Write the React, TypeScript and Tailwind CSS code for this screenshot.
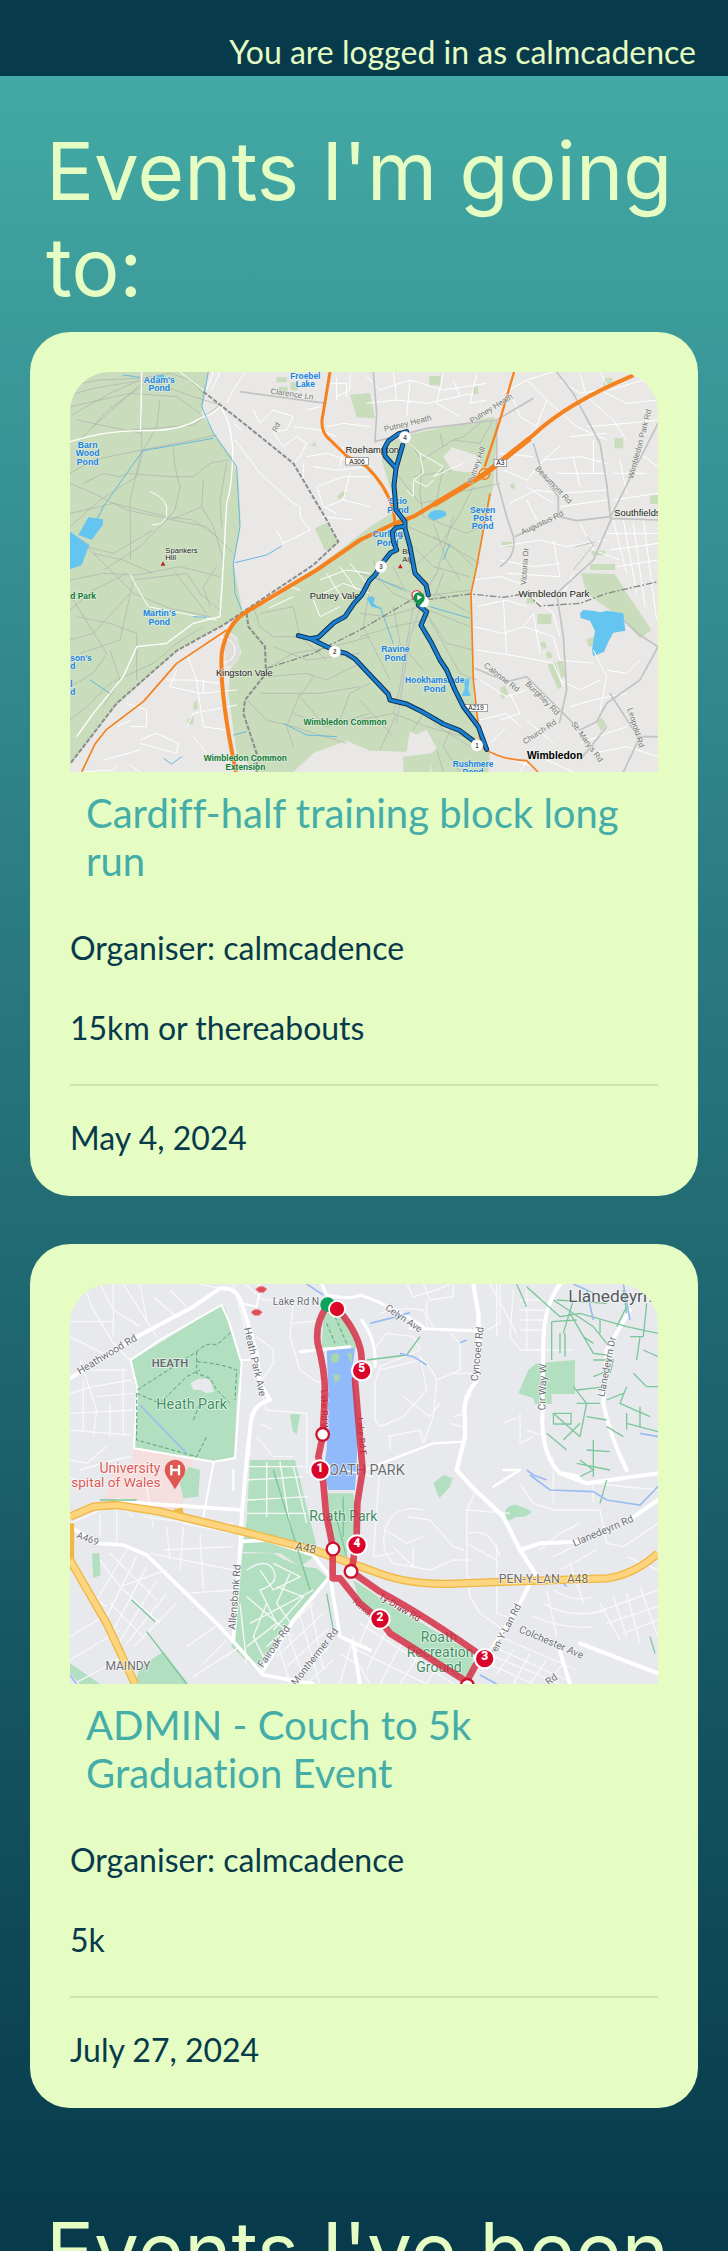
import type { ReactNode } from "react";

type Label = {
  x: number;
  y: number;
  text: string;
  fill: string;
  size?: number;
  rotate?: number;
  bold?: boolean;
  anchor?: "start" | "middle" | "end";
};

function MapLabels({ labels, halo }: { labels: Label[]; halo: string }) {
  return (
    <g>
      {labels.map((l, i) => (
        <text
          key={i}
          x={l.x}
          y={l.y}
          fill={l.fill}
          fontSize={l.size ?? 27}
          fontWeight={l.bold ? 700 : 400}
          textAnchor={l.anchor ?? "middle"}
          stroke={halo}
          strokeWidth={5}
          strokeLinejoin="round"
          paintOrder="stroke"
          transform={l.rotate ? `rotate(${l.rotate} ${l.x} ${l.y})` : undefined}
        >
          {l.text}
        </text>
      ))}
    </g>
  );
}

const water = "#1583e0";
const wood = "#0b7a35";
const road = "#777777";
const ink = "#222222";

const wimbledonLabels: Label[] = [
  { x: 298, y: 68, text: "Adam's", fill: water, bold: true, size: 26 },
  { x: 298, y: 94, text: "Pond", fill: water, bold: true, size: 26 },
  { x: 736, y: 58, text: "Froebel", fill: water, bold: true, size: 25 },
  { x: 736, y: 82, text: "Lake", fill: water, bold: true, size: 25 },
  { x: 83, y: 263, text: "Barn", fill: water, bold: true, size: 26 },
  { x: 83, y: 289, text: "Wood", fill: water, bold: true, size: 26 },
  { x: 83, y: 315, text: "Pond", fill: water, bold: true, size: 26 },
  { x: 316, y: 578, text: "Spankers", fill: ink, size: 23, anchor: "start" },
  { x: 316, y: 600, text: "Hill", fill: ink, size: 23, anchor: "start" },
  { x: 695, y: 110, text: "Clarence Ln", fill: road, size: 24, rotate: 8 },
  { x: 937, y: 278, text: "Roehampton", fill: ink, size: 28 },
  { x: 655, y: 205, text: "Rd", fill: road, size: 22, rotate: -62 },
  { x: 1045, y: 198, text: "Putney Heath", fill: road, size: 24, rotate: -14 },
  { x: 1298, y: 152, text: "Putney Heath", fill: road, size: 24, rotate: -32 },
  { x: 1257, y: 318, text: "Putney Hill", fill: road, size: 24, rotate: -70 },
  { x: 1475, y: 380, text: "Beaumont Rd", fill: road, size: 24, rotate: 46 },
  { x: 1450, y: 495, text: "Augustus Rd", fill: road, size: 24, rotate: -25 },
  { x: 1747, y: 254, text: "Wimbledon Park Rd", fill: road, size: 24, rotate: -75 },
  { x: 1663, y: 467, text: "Southfields", fill: ink, size: 28, anchor: "start" },
  { x: 1014, y: 432, text: "Scio", fill: water, bold: true, size: 26 },
  { x: 1014, y: 458, text: "Pond", fill: water, bold: true, size: 26 },
  { x: 1268, y: 458, text: "Seven", fill: water, bold: true, size: 26 },
  { x: 1268, y: 483, text: "Post", fill: water, bold: true, size: 26 },
  { x: 1268, y: 508, text: "Pond", fill: water, bold: true, size: 26 },
  { x: 983, y: 531, text: "Curling", fill: water, bold: true, size: 26 },
  { x: 983, y: 557, text: "Pond", fill: water, bold: true, size: 26 },
  { x: 1043, y: 583, text: "Big", fill: ink, size: 23 },
  { x: 1043, y: 605, text: "Alp", fill: ink, size: 23 },
  { x: 31, y: 717, text: "d Park", fill: wood, bold: true, size: 25, anchor: "start" },
  { x: 298, y: 769, text: "Martin's", fill: water, bold: true, size: 26 },
  { x: 298, y: 795, text: "Pond", fill: water, bold: true, size: 26 },
  { x: 31, y: 902, text: "son's", fill: water, bold: true, size: 25, anchor: "start" },
  { x: 31, y: 928, text: "d", fill: water, bold: true, size: 25, anchor: "start" },
  { x: 31, y: 980, text: "l", fill: water, bold: true, size: 25, anchor: "start" },
  { x: 31, y: 1006, text: "d", fill: water, bold: true, size: 25, anchor: "start" },
  { x: 824, y: 718, text: "Putney Vale", fill: ink, size: 28 },
  { x: 553, y: 949, text: "Kingston Vale", fill: ink, size: 28 },
  { x: 855, y: 1094, text: "Wimbledon Common", fill: wood, bold: true, size: 25 },
  { x: 556, y: 1204, text: "Wimbledon Common", fill: wood, bold: true, size: 25 },
  { x: 556, y: 1229, text: "Extension", fill: wood, bold: true, size: 25 },
  { x: 1482, y: 712, text: "Wimbledon Park", fill: ink, size: 29 },
  { x: 1402, y: 620, text: "Victoria Dr", fill: road, size: 24, rotate: -86 },
  { x: 1006, y: 876, text: "Ravine", fill: water, bold: true, size: 26 },
  { x: 1006, y: 902, text: "Pond", fill: water, bold: true, size: 26 },
  { x: 1124, y: 969, text: "Hookhamslade", fill: water, bold: true, size: 25 },
  { x: 1124, y: 995, text: "Pond", fill: water, bold: true, size: 26 },
  { x: 1320, y: 958, text: "Calonne Rd", fill: road, size: 24, rotate: 38 },
  { x: 1442, y: 1020, text: "Burghley Rd", fill: road, size: 24, rotate: 45 },
  { x: 1443, y: 1122, text: "Church Rd", fill: road, size: 24, rotate: -33 },
  { x: 1575, y: 1150, text: "St. Mary's Rd", fill: road, size: 24, rotate: 54 },
  { x: 1720, y: 1105, text: "Leopold Rd", fill: road, size: 24, rotate: 73 },
  { x: 1484, y: 1197, text: "Wimbledon", fill: "#000000", bold: true, size: 31 },
  { x: 1239, y: 1222, text: "Rushmere", fill: water, bold: true, size: 25 },
  { x: 1239, y: 1246, text: "Pond", fill: water, bold: true, size: 25 },
];

function Shield({ x, y, text }: { x: number; y: number; text: string }) {
  const w = text.length * 15 + 8;
  return (
    <g>
      <rect x={x - w / 2} y={y - 11} width={w} height={22} fill="#fff" stroke="#777" strokeWidth={2} />
      <text x={x} y={y + 7} fontSize={20} textAnchor="middle" fill="#111">
        {text}
      </text>
    </g>
  );
}

function WimbledonMap() {
  return (
    <svg
      viewBox="30 36 1764 1200"
      preserveAspectRatio="xMidYMid slice"
      role="img"
      aria-label="Route map of Wimbledon Common"
      className="block h-[400px] w-full rounded-t-[40px] font-['Liberation_Sans',sans-serif]"
    >
      <rect x="30" y="36" width="1764" height="1200" fill="#e9e8e6" />
      <g fill="#c9dcbc">
        <path d="M30 36H445L425 160L470 230L515 290L535 350L542 490L520 610L550 765L490 795L350 872L170 1035L30 1215Z" />
        <path d="M640 720L840 570L930 500L1010 450L965 300L985 250L1040 225L1300 170L1312 190L1300 380L1250 620L1232 700L1240 1000L1258 1120L1290 1175L1285 1236H1115L1110 1180L1090 1130L1050 1115L1040 1175L930 1172L860 1142L760 1180L700 1236H590L530 1180L505 1000L510 930L545 880L530 830L500 810L550 760Z" />
        <path d="M870 105L930 98L945 175L890 172Z" />
        <path d="M650 52h30v15h-30zM655 80h28v13h-28zM692 67h22v24h-22zM1108 48h34v28h-34zM1238 80h16v22h-16zM1632 54h26v26h-26zM1664 235h26v30h-26zM1770 406l28 0v26h-28z" />
        <path d="M765 505L800 488L838 550L795 572ZM830 410L850 393L860 402L838 418ZM752 255L766 245L770 260ZM1350 372L1362 370L1366 384L1354 388ZM1325 545h30v16h-30zM1595 572h40v14h-40zM1590 612h75v18h-75z" />
        <path d="M1563 640L1665 642L1700 700L1775 810L1740 835L1690 780L1580 700Z" />
        <path d="M1432 762h42v30h-42zM1400 715h25v15h-25zM1578 840L1605 828L1610 850L1588 862ZM1440 850l14-6 8 18-14 6zM1456 880l14-6 8 18-14 6zM1462 915l24-10 20 75-12 8zM1490 905l18-6 10 50-14 6z" />
        <path d="M1608 1082L1625 1073L1640 1095L1622 1112ZM1030 1190L1115 1180L1110 1236H1030ZM1320 985L1335 975L1345 1000L1325 1018Z" />
        <path d="M400 1030l10-10 5 25-14 6zM380 1080l20-14 0 28-20-4z" />
      </g>
      <path d="M1150 290L1175 262L1258 288L1265 340L1176 332Z" fill="#e9e8e6" />
      <path d="M490 820Q545 830 540 880Q535 920 500 918" fill="#e0dedb" />
      <path d="M1040 1136L1100 1110L1130 1165L1115 1180L1095 1176Z" fill="#e9e8e6" />

      <g fill="#63c5f0">
        <path d="M85 472L130 478L128 495L95 540L55 525Z" />
        <path d="M30 515L88 555L65 615L30 628Z" />
        <path d="M1103 468Q1110 448 1140 450Q1165 455 1158 468Q1135 478 1120 482Z" />
        <path d="M1560 760L1570 750L1605 753Q1620 760 1640 752L1690 760L1696 812L1660 818L1645 845L1632 875L1600 888L1596 870L1605 812L1590 782L1562 774Z" />
        <path d="M920 715L935 708L945 715L940 730L965 748L935 740Z" />
        <path d="M1210 958L1228 955L1225 990L1232 1008L1205 1008L1215 985Z" />
        <path d="M290 44h22v10h-22z" />
      </g>

      <g fill="none" stroke="#afb0ac" strokeWidth="2">
        <path d="M30 75L120 60L240 55L330 40M35 165L150 100L240 60M60 240L150 145L250 75M30 105L100 85L190 70L260 60L400 110L480 135M100 200L245 70M30 140L210 100L350 110L420 160M330 40L390 60L430 100" />
        <path d="M30 340L100 300L245 270L400 240L470 225M245 160L245 270L210 420L212 600M250 270L230 350L120 420L30 500M50 180L245 220M210 210L400 195L480 135M70 370L130 340L180 350L205 340L330 350L400 350L450 310L505 300M300 120L290 200L250 270" />
        <path d="M30 370L100 400L200 450L340 480L440 500L520 580M30 460L160 430L320 470L400 480L470 530M340 260L345 320L360 380L345 450L320 480L240 560L130 630M430 360L425 440L380 460L330 480M425 440L460 500L490 600M500 310L480 420L485 500M60 540L140 620L220 700L330 745L450 770M80 560L160 580L280 510M100 580L190 600L280 640" />
        <path d="M30 660L130 640L230 645L360 620L480 650M30 750L100 690L200 640M40 720L90 800L140 880L100 940L30 980M50 770L150 790L230 820L230 960M150 870L180 960L130 1040M60 880L180 840L220 660L380 640L420 700L490 760M30 840L100 820L210 700M340 630L440 760M470 620L430 680L450 740M30 1080L80 1040L150 970L280 910L350 850L430 800" />
        <path d="M1000 330L1080 430L1130 420L1180 400L1320 370M1040 230L1085 300L1180 240L1260 250L1300 180M1085 300L1080 400L1090 470M1140 220L1150 260M1180 240L1210 230L1260 190M1060 350L1180 330M1130 420L1150 320M1000 480L1090 520L1180 560L1240 620M1120 490L1160 600L1200 660M1180 470L1130 640L1090 700M1090 470L1220 520L1260 500M1060 560L1120 620L1230 650M1120 530L1260 610M1040 640L1150 540L1200 460L1240 380" />
        <path d="M900 640L1020 680L1080 710L1230 690M940 600L960 660L1000 700L1090 740M1000 620L1040 700M900 760L980 770L1080 740L1230 800M900 830L1000 800L1100 780M1060 740L1040 850L1020 980L1000 1060M1100 760L1160 850L1240 870M1110 780L1200 940L1250 960M930 680L910 800L960 900L990 960M1000 740L1020 850L1090 930M1130 700L1230 760M1150 640L1120 720" />
        <path d="M630 920L700 880L820 860L930 830M620 950L740 940L800 960L900 910M600 1000L780 1000L900 980M700 1060L800 1100L930 1060M720 1000L680 1100L700 1160M840 1080L870 1000L930 970M560 1020L620 1080L700 1100L860 1150M900 1080L1000 1060L1100 1100L1250 1140M960 1170L1010 1060M760 950L720 1010L780 1080M900 1020L1000 1130M1090 1060L1060 1110M1120 1090L1230 1160M1170 1110L1150 1160L1200 1236M1130 1170L1150 1236" />
        <path d="M580 740L600 800L640 830L720 830M600 760L700 740L720 830L800 900M640 860L740 900L900 880" />
      </g>

      <g fill="none" stroke="#ffffff" strokeWidth="4" strokeLinejoin="round">
        <path d="M30 245Q140 210 250 212T420 175Q470 160 482 135M245 36L242 215M482 140Q520 200 518 290T500 430L490 615L480 770L400 790L320 850L230 860L190 950L100 1060L50 1130" />
        <path d="M270 395Q310 410 320 440V470L305 490L275 495M210 640L230 680L265 740L470 780M360 36L430 90" strokeWidth="3" />
        <path d="M460 36L440 90M555 36L520 90L500 130M480 36L455 90M525 240L600 340L700 430L720 440V470L750 510M650 510L670 550L750 510" strokeWidth="3" />
        <path d="M520 190L545 210M580 150L600 190L640 150L700 170L680 210L640 215L670 260L710 230L740 250L720 290L700 310M740 150L780 140M810 70H860V110M830 50V120M870 40V90L830 110M800 200L850 190L930 200M700 200L780 210L830 230M740 290L800 280L860 300M760 320L830 330L930 320M850 260L840 320M770 380L850 350L930 350M770 380L790 440L830 460M800 440L850 420L930 440M870 340L850 420M730 310V360M790 470L880 480" strokeWidth="3" />
        <path d="M1040 240L1080 280L1150 320M1080 280L1090 340L1060 360L1100 380L1120 360M1040 390L1060 410L1060 365M1150 320L1120 350L1210 310" strokeWidth="3" />
        <path d="M920 50L960 90L1050 60L1150 90L1280 70M1000 36L1010 120L1100 130L1240 100M1050 60L1040 170M1150 40L1130 130L1200 170M1250 40L1230 130L1280 120M1180 60L1200 110M920 130L1010 120M1330 100L1400 60L1460 120L1430 200L1380 170L1360 120M1400 60L1480 36M1460 120L1550 200L1640 240M1500 60L1560 100L1620 90L1700 130L1794 120M1560 40L1580 110L1660 180L1700 240M1620 36L1650 90L1750 60M1580 200L1700 190L1794 180M1530 230L1640 220" strokeWidth="3" />
        <path d="M1330 330L1400 360L1450 300L1500 260M1350 430L1430 390L1500 400M1320 280L1420 290M1450 300L1560 290L1640 310M1490 340L1640 340M1540 290L1560 380M1500 400L1640 390M1600 240V340M1400 420L1430 480M1660 340H1760M1680 300L1700 400M1740 280L1794 320M1500 440L1640 420M1400 380L1480 430M1660 420L1794 400" strokeWidth="3" />
        <path d="M1320 560L1440 540L1520 560L1640 540M1320 600L1420 620L1500 610M1340 640L1500 650L1480 540M1560 490L1600 570L1680 600M1660 480L1700 640M1690 480L1730 700M1720 490L1755 740M1750 480L1790 780M1640 520H1794M1650 570L1794 550M1670 620L1794 600M1540 640L1510 700" strokeWidth="3" />
        <path d="M1240 660L1320 650L1380 670M1250 740L1340 720L1400 740M1240 800L1330 820L1390 800L1420 760M1330 720L1340 880M1250 870L1380 890L1480 910M1420 760L1440 880M1390 800L1480 830L1500 900L1600 910M1400 700L1480 760L1500 830M1480 910L1510 980" strokeWidth="3" />
        <path d="M1260 960L1340 1010L1400 990M1350 1000L1380 1060L1320 1080M1260 1080L1340 1060L1380 1100M1290 1150L1340 1100M1500 960L1560 990L1620 960M1600 870L1640 950L1620 1050M1530 1040L1600 1020L1700 1000M1400 1080L1480 1150M1560 1150L1640 1120L1700 1100M1600 1180L1700 1160L1794 1190M1460 1200L1540 1236M1330 1190L1420 1220M1640 930L1700 940L1740 900M1380 1236L1400 1205" strokeWidth="3" />
        <path d="M780 660L860 630L930 640M790 700L850 670L930 700M760 720L780 770L840 740M800 640L850 720M840 620L890 690M870 610L920 670M625 745L700 710M690 680L720 690M480 830Q525 840 525 870T490 910" strokeWidth="3" />
        <path d="M320 960L400 960L480 970M350 930L330 980L420 1000L530 990M380 880L410 960L430 1100L500 1110M430 960V1000M380 1100L400 1060L530 1035M200 1030L260 1050L260 1100L210 1100M240 1140L290 1120L355 1150L350 1180L240 1150M400 1130L440 1180M170 1100L215 1080M130 1200L240 1170M60 1236L160 1230L170 1215M240 1236L210 1215" strokeWidth="3" />
      </g>

      <g fill="none" stroke="#c2c2c2" strokeWidth="5">
        <path d="M940 36L950 160L945 245L1100 205L1310 180L1420 115M1310 180V360L1340 470L1360 530Q1370 590 1320 620M1490 36L1540 100L1620 250L1640 370L1652 480L1600 600L1490 700L1510 830L1520 990L1498 1090M1420 250L1450 350L1495 410V465L1365 530M1495 470L1550 482L1652 470L1794 190M1652 475L1794 480M1245 925L1340 965L1400 950L1560 1110L1610 1085L1640 1030L1740 960L1794 860M1794 860L1740 825L1690 780M1650 1000L1740 1140M1794 1130L1740 1130L1690 1236M1560 1200L1640 1100M540 95L800 130" />
        <path d="M1130 640L1090 700L1075 760L1050 830L1010 1090" strokeWidth="4" />
        <path d="M1540 630L1560 605L1600 555L1580 530M1545 560L1610 545" strokeWidth="3" />
      </g>
      <g fill="none" stroke="#68b8dc" strokeWidth="3">
        <path d="M445 36L425 140L460 220L530 320L540 500L520 610L525 700L545 750M250 270L200 340L130 440L110 480M250 272L460 235M525 608L620 585L665 558M190 45L240 52M400 770L440 772M90 960L150 1000M310 1195L335 1212L365 1190M520 1125L560 1115M670 1090L740 1125L830 1130M940 650L1030 690M960 740L1000 850M1150 600L1170 550M1110 740L1230 775" />
      </g>

      <path
        d="M430 95L545 185L700 310L800 480L835 545L760 615L490 795L350 872L170 1030L30 1212M560 760L565 800L615 860L618 940L555 1020L550 1060L590 1180V1236"
        fill="none"
        stroke="#8c8c8c"
        strokeWidth="6"
        strokeDasharray="14 5"
      />
      <path
        d="M620 925L760 880L900 810L1070 710L1110 718L1230 702L1330 712L1400 700L1440 738L1560 730L1640 700L1794 665"
        fill="none"
        stroke="#888"
        strokeWidth="4"
        strokeDasharray="20 6 6 6"
      />

      <g fill="none" stroke="#f5811f" strokeLinejoin="round">
        <path d="M810 36L786 180Q784 210 800 230L860 288L920 320Q1000 400 1005 490" strokeWidth="9" />
        <path d="M1362 36L1320 180L1274 320" strokeWidth="7" />
        <path d="M1290 400L1250 620L1233 700L1240 960L1252 1070L1262 1160Q1320 1200 1400 1202L1434 1236" strokeWidth="5" />
        <circle cx="1273" cy="342" r="16" strokeWidth="5" />
        <path d="M500 810L350 910L250 1025L140 1108L105 1152L65 1236" strokeWidth="5" />
        <path d="M1720 46Q1520 130 1420 225L1300 325L1060 470L1000 492L900 540L770 630L560 755Q500 790 485 880Q478 1000 528 1236" strokeWidth="12" />
        <path d="M1410 235L1270 345L1120 435" strokeWidth="16" />
      </g>

      <path d="M309 604l7 13h-14zM1023 518l7 13h-14zM1021 612l7 13h-14z" fill="#c3192d" />
      <Shield x={891} y={304} text="A306" />
      <Shield x={1321} y={309} text="A3" />
      <Shield x={1248} y={1044} text="A219" />
      <MapLabels labels={wimbledonLabels} halo="#eef3ec99" />

      {[
        { color: "#10324e", width: 15 },
        { color: "#197fd3", width: 9 },
      ].map(({ color, width }) => (
        <path
          key={color}
          d="M1040 215L1015 222L985 243L973 265L975 288L1008 325L1028 255M1008 325L1002 375L1008 450L1035 485V505L1050 560L1065 640L1098 675L1105 705M1035 498L1008 503L997 515L1000 545L1010 570L992 578L965 612L945 645L928 662L905 705L882 730L855 770L822 788L775 832L750 836L715 827M755 838L825 872L858 880L885 897L930 945L985 1003L990 1020L1040 1032L1090 1057L1150 1092L1200 1112L1250 1150M1075 735L1100 756L1083 796L1115 850L1140 900L1160 930L1185 990L1210 1040L1255 1100L1280 1168"
          fill="none"
          stroke={color}
          strokeWidth={width}
          strokeLinejoin="round"
          strokeLinecap="round"
        />
      ))}
      {[
        { x: 1035, y: 232, n: "4" },
        { x: 963, y: 620, n: "3" },
        { x: 824, y: 875, n: "2" },
        { x: 1251, y: 1156, n: "1" },
      ].map(({ x, y, n }) => (
        <g key={n}>
          <circle cx={x} cy={y} r="18" fill="#fff" stroke="#ccc" strokeWidth="1" />
          <text x={x} y={y + 7} fontSize="19" fontWeight="700" textAnchor="middle" fill="#555">
            {n}
          </text>
        </g>
      ))}
      <circle cx="1090" cy="725" r="17" fill="#fff" />
      <circle cx="1070" cy="706" r="14" fill="#fff" stroke="#dc3c50" strokeWidth="4" />
      <path d="M1077 740L1062 722A17 17 0 1 1 1092 722Z" fill="#16914c" />
      <path d="M1072 704V721L1086 712Z" fill="#fff" />
    </svg>
  );
}

const grey = "#6b6e73";
const park = "#3f8e5f";
const rose = "#d85a55";

const roathLabels: Label[] = [
  { x: 146, y: 262, text: "Heathwood Rd", fill: grey, size: 31, rotate: -31 },
  { x: 330, y: 290, text: "HEATH", fill: grey, size: 34, bold: true },
  { x: 395, y: 417, text: "Heath Park", fill: park, size: 43 },
  { x: 575, y: 278, text: "Heath Park Ave", fill: grey, size: 31, rotate: 77 },
  { x: 708, y: 105, text: "Lake Rd N", fill: grey, size: 31 },
  { x: 210, y: 608, text: "University", fill: rose, size: 42 },
  { x: 302, y: 652, text: "spital of Wales", fill: rose, size: 41, anchor: "end" },
  { x: 782, y: 420, text: "Lake Rd W", fill: "#7c2b3a", size: 26, rotate: 90 },
  { x: 896, y: 500, text: "Lake Rd E", fill: "#7c2b3a", size: 26, rotate: 84 },
  { x: 1034, y: 614, text: "ROATH PARK", fill: grey, size: 43, anchor: "end" },
  { x: 1026, y: 153, text: "Celyn Ave", fill: grey, size: 29, rotate: 34 },
  { x: 1262, y: 253, text: "Cyncoed Rd", fill: grey, size: 31, rotate: -84 },
  { x: 1458, y: 352, text: "Cir Way W", fill: grey, size: 31, rotate: -88 },
  { x: 1650, y: 292, text: "Llanedeyrn Dr", fill: grey, size: 30, rotate: -79 },
  { x: 1525, y: 97, text: "Llanedeyrn", fill: "#55585c", size: 52, anchor: "start" },
  { x: 80, y: 815, text: "A469", fill: grey, size: 29, rotate: 20 },
  { x: 735, y: 845, text: "A48", fill: "#7b6b3c", size: 36, rotate: 12 },
  { x: 850, y: 752, text: "Roath Park", fill: park, size: 42 },
  { x: 534, y: 982, text: "Allensbank Rd", fill: grey, size: 31, rotate: -85 },
  { x: 650, y: 1135, text: "Fairoak Rd", fill: grey, size: 31, rotate: -55 },
  { x: 772, y: 1166, text: "Monthermer Rd", fill: grey, size: 30, rotate: -52 },
  { x: 204, y: 1200, text: "MAINDY", fill: grey, size: 36 },
  { x: 1408, y: 940, text: "PEN-Y-LAN", fill: grey, size: 37 },
  { x: 1553, y: 940, text: "A48", fill: "#7b6b3c", size: 36 },
  { x: 1633, y: 792, text: "Llanedeyrn Rd", fill: grey, size: 31, rotate: -23 },
  { x: 1343, y: 1086, text: "Pen-Y-Lan Rd", fill: grey, size: 30, rotate: -62 },
  { x: 1470, y: 1126, text: "Colchester Ave", fill: grey, size: 31, rotate: 23 },
  { x: 1014, y: 1020, text: "Ty-Draw Rd", fill: "#7c2b3a", size: 28, rotate: 31 },
  { x: 920, y: 1035, text: "Ninian Rd", fill: grey, size: 27, rotate: 40 },
  { x: 1137, y: 1117, text: "Roath", fill: park, size: 42 },
  { x: 1140, y: 1162, text: "Recreation", fill: park, size: 42 },
  { x: 1137, y: 1206, text: "Ground", fill: park, size: 42 },
  { x: 1480, y: 1236, text: "Rd", fill: grey, size: 30, rotate: -35 },
];

function RoathMap() {
  return (
    <svg
      viewBox="30 42 1764 1200"
      preserveAspectRatio="xMidYMid slice"
      role="img"
      aria-label="Route map of Roath Park"
      className="block h-[400px] w-full rounded-t-[40px] font-[Roboto,sans-serif]"
    >
      <rect x="30" y="42" width="1764" height="1200" fill="#e8e9ed" />
      <path d="M220 535L400 570L360 730L130 690L160 600L215 590Z" fill="#f6dfdf" />
      <path d="M385 590L420 600L415 680L370 685L360 640Z" fill="#b2dfbf" />
      <g fill="#b2dfbf">
        <path d="M485 105Q500 110 505 150L545 270L530 400L522 560L460 575L220 532L232 355L212 272Z" />
        <path d="M570 570H705L775 850L720 890L660 850L548 845L560 750Z" />
        <path d="M545 850L640 850Q700 890 770 895L810 930L700 1050L590 1200L515 1130Z" />
        <path d="M790 130L850 125L895 235L785 232ZM800 670H880L890 760L850 880L815 790Z" />
        <path d="M690 433H720L710 495L697 480ZM96 850H118L122 915L100 925Z" />
        <path d="M1430 280L1545 270V372H1475V402H1425L1420 385L1375 370L1405 300Z" />
        <path d="M1120 640L1150 615L1178 625L1170 650L1138 685ZM1335 722Q1350 700 1370 705Q1400 715 1415 725Q1400 745 1370 740L1340 755Z" />
        <path d="M310 1145L385 1242H225L240 1190ZM30 1180L120 1242H60L30 1210Z" />
        <path d="M880 930L1000 1010L1240 1150L1235 1215L1190 1220L1000 1085L900 1000Z" />
      </g>
      <path d="M392 340Q420 318 450 330L462 365L440 370L420 360L400 360Z" fill="#e8e9ed" />
      <path d="M800 235H885L878 290L895 480L885 660H805L790 600L800 540L805 360Z" fill="#90baf9" />
      <g fill="#a9d6ad">
        <path d="M812 255Q825 245 838 255L835 275L815 280ZM860 250L875 250V280ZM820 315L840 312L838 330L825 338Z" />
      </g>

      <g fill="none" stroke="#f8f8fa" strokeWidth="4">
        <path d="M70 42L95 110L160 220L210 270M160 42V200M30 155L160 155M120 42L160 120L240 170M190 42L290 200M240 42L260 150M280 80L350 140M330 60L380 110M30 200L130 250M30 370L100 350L215 330M60 270L110 420L100 500M30 430L220 420M30 480L210 495M110 380L220 370M70 300L200 300M70 330V480M150 400V500M190 290V500M30 570L80 580L140 530M60 600L160 570L215 560M30 620L70 650" />
        <path d="M520 42L620 420L740 430L740 610M555 42L610 90H700M590 200L640 240V280L600 340M700 90L690 200L720 300L770 335H800M730 240L800 240M700 160L790 150M570 430L570 560M590 500L640 560H700M600 460L640 480M420 42L500 60" />
        <path d="M560 590H740M560 630L730 620M560 690L745 680M620 575V740M660 575L690 770M700 590L740 760M560 730L740 730" />
        <path d="M960 130Q1020 110 1090 120L1120 170M1040 42L1060 80L1130 60L1170 42M1090 42L1110 90L1180 80V42M1100 90V180M940 240L980 190L1060 200L1080 240L960 290L945 340V450L960 470L1030 440L1100 360L1080 260M1080 260Q1120 300 1130 330L1200 300V220L1170 190M1130 330L1120 440L1090 520M1030 380L1110 440M960 300L1080 270M1110 440L1140 400M1170 310H1240M1240 375L1210 380M1220 430L1180 440M1210 470L1170 460M980 500L1080 480L1090 520M990 540V500M1280 180L1320 160V42M1360 60L1350 200L1380 240H1440M1310 42V200" />
        <path d="M1400 60V240M1380 90H1450M1380 120H1450M1380 150H1450M1380 180H1450M1430 240H1540M1380 430L1380 520L1420 500M1330 460L1380 440M1400 480L1460 500M1480 430L1475 462L1530 460V430L1480 430" />
        <path d="M850 600L940 620M960 590L950 720L940 860L1000 850M1090 720Q1000 700 975 780Q960 840 1000 880L1110 900L1180 870L1230 870M975 780L1040 820L1090 800M1060 830V890M1040 740L1110 750L1180 830L1210 840M1000 830L1060 890M1250 660L1220 720V900L1230 980L1260 1030L1330 1080M1225 790Q1290 770 1320 860M1310 820V1030L1340 1040M1220 820L1310 870M1220 720L1350 730M1380 640L1420 700L1480 720L1620 720L1640 820L1690 830L1794 760M1480 560V700M1600 700V640L1794 660M1290 42L1370 190" />
        <path d="M1440 840L1500 790L1560 760M1480 860L1580 810M1500 900L1610 840M1480 960Q1540 1000 1600 980M1450 1000Q1530 1050 1640 1020M1420 1040Q1520 1080 1600 1070M1530 880L1570 1000M1620 1000L1680 1110M1660 980L1700 1100M1700 970L1740 1120M1740 950L1794 1100M1600 1030L1794 960M1640 1060L1794 1010M1690 1090L1794 1050M1700 860L1794 900M1460 960L1490 1100" />
        <path d="M900 1060L1180 1242M930 1050L880 1160M980 1080L920 1200M1030 1110L960 1242M1080 1150L1020 1242M870 1130L1100 1242M1130 1190L1100 1242M1260 1170L1420 1242M1300 1130L1520 1230M1320 1100L1550 1200M1360 1140L1310 1210M1410 1150L1360 1242M1460 1170L1410 1242M1510 1180L1460 1242M1280 1150L1500 1242" />
        <path d="M260 650L280 770M370 760L520 790M250 740L400 760L520 760M320 770L330 870M370 770L360 900M420 790L430 960M310 840L520 830M270 850L520 900M380 970L520 960M150 850L290 990M120 870L180 950L320 900M200 840L110 990L140 1010M230 860L130 1060M260 890L150 1100M290 930L170 1130M320 970L200 1120M350 1000L220 1130M180 950L300 1060M150 1000L250 1100M30 760L170 700L220 740M170 720V830M120 730V800M30 1100L130 1040M30 1170L180 1080M40 1242L120 1200L200 1150M380 1130L480 1060M430 1180L500 1110M400 1220L540 1130" />
        <path d="M560 900Q620 860 640 900T600 960L650 1060L560 1130M640 880L720 920L640 960L600 900M560 980L700 1100M570 1060L760 960M650 950L730 980L640 1080M690 910L650 1000L700 1070M540 1000L560 1180M620 1000L580 1100L620 1180" />
        <path d="M620 1130L760 1000M650 1160L790 1030M680 1190L800 1080M700 1230L810 1130M740 1242L820 1170M750 1000L790 1200M720 1040L780 1242M680 1080L730 1220M650 1110L690 1242M880 1100L840 1242M840 1150L900 1190L930 1242" />
      </g>

      <g fill="none" stroke="#ffffff" strokeLinejoin="round" strokeLinecap="round">
        <path d="M30 325L240 195L400 110L480 55Q530 50 545 100L570 180L590 250L600 340L630 390Q580 400 572 460L560 570L545 740L540 850L520 1110" strokeWidth="12" />
        <path d="M545 100L590 110L600 60L595 42M545 270H570L590 250M212 270L232 355L222 535L460 575L525 565L545 280L505 150L485 105L300 210ZM520 600V660M460 580L430 740" strokeWidth="6" />
        <path d="M900 75Q980 100 1090 170M1050 175L1250 182M785 42L800 75Q870 90 900 75M870 230L720 245M905 150Q950 210 945 290" strokeWidth="9" />
        <path d="M1240 42L1255 130L1258 220L1250 330Q1205 390 1215 440V500L1190 600L1240 655L1330 740L1380 840L1425 910" strokeWidth="13" />
        <path d="M1215 515L1120 520L900 605M1300 650L1380 600L1330 600" strokeWidth="7" />
        <path d="M1500 42Q1450 110 1450 220L1447 460Q1450 560 1500 610L1580 640L1794 610M1710 120L1640 240L1630 400Q1650 500 1700 600M1500 610L1560 620M1794 690L1700 755M1560 815L1440 820L1380 840M1425 910L1380 1000L1270 1180M1560 1120L1794 1210M1500 1145L1530 1242" strokeWidth="12" />
        <path d="M30 770L110 820L190 825L260 855L480 1070L610 1215L760 1242M540 815L620 810L760 855L810 920L700 1050L610 1200M810 920L840 1100L930 1140M880 1120L900 1242M170 690L250 700L400 710L545 720" strokeWidth="11" />
      </g>

      <g fill="none" stroke="#7cc79a" strokeWidth="4">
        <path d="M1370 42L1400 110M1400 50L1500 140L1560 130L1700 170L1794 190M1480 90L1600 170L1640 220M1490 90L1640 100M1530 130L1600 250L1640 255M1475 155V270M1500 190V250M1515 190V260M1475 155L1550 150M1600 270L1660 270L1650 310M1600 320L1650 300M1620 150V190M1570 200L1600 220M1540 90L1510 190M1700 110L1670 170M1760 100L1750 200L1710 200M1770 70L1794 130M1580 60L1650 90M1690 60L1700 130M1740 200L1730 270M1750 240L1794 260" />
        <path d="M1540 350L1580 400L1560 500M1460 490L1520 540M1480 430L1560 500M1550 360L1640 350M1550 400H1620M1580 440L1640 450M1560 460L1510 510M1700 350L1680 400L1770 440M1720 310L1760 350L1794 350M1700 460L1794 485M1700 430V480M1740 410V470M1640 390L1690 370M1560 570L1600 600L1560 620M1580 540L1650 545M1640 470L1690 500M1600 510V620M1550 580L1650 600M1640 630L1620 700M1480 430h53v32h-53zM1770 1100l15 50" />
        <path d="M920 270L1040 255L1080 200M215 990L285 1055M260 1085L380 1242M800 970L820 1080M850 680V800M830 750L860 860M120 690L230 690M640 600L750 960" />
      </g>
      <g fill="none" stroke="#55a578" strokeWidth="3" strokeDasharray="12 7">
        <path d="M232 360L410 245Q440 215 470 225L515 185M410 245V310L450 325L470 360L510 400M410 275Q480 280 530 300L525 390M230 370L300 400L380 320L420 300M230 370V510L410 560L440 500M400 450L420 400" />
        <path d="M800 160L825 220M825 140L860 220" />
      </g>
      <g fill="none" stroke="#9bbcf3" strokeWidth="5">
        <path d="M240 405L380 550M740 42L790 75M930 160L990 145L1050 128M1020 250L1060 260L1100 285M1200 218L1220 210M1540 42L1580 60L1600 150M1690 42L1710 150M1400 600L1420 615L1460 630M1410 615L1470 660L1600 665L1640 690L1740 705L1794 650M1740 490L1794 500M1510 940L1520 950M1260 1215L1310 1242M30 1215L50 1242" />
      </g>

      <g fill="none" strokeLinejoin="round">
        <path d="M30 740L100 710L170 705L300 725L550 785L760 840L930 900Q1050 950 1200 940L1640 925Q1720 915 1794 850M30 870L140 1060L225 1242M30 760V900M355 715L360 740" stroke="#efb744" strokeWidth="25" />
        <path d="M30 740L100 710L170 705L300 725L550 785L760 840L930 900Q1050 950 1200 940L1640 925Q1720 915 1794 850M30 870L140 1060L225 1242" stroke="#fcd57e" strokeWidth="17" />
      </g>

      <g stroke="#eb8b92" strokeWidth="3" fill="#e04d58">
        <path d="M587 58l10-8h14l10 8-10 9h-14zM573 127l10-8h14l10 8-10 9h-14z" />
      </g>
      <MapLabels labels={roathLabels} halo="#ffffffb0" />

      <g>
        <circle cx="345" cy="600" r="31" fill="#dc5851" />
        <path d="M318 615L345 658L372 615Z" fill="#dc5851" />
        <path d="M334 585V616M357 585V616M334 600H357" stroke="#fff" strokeWidth="7" />
      </g>

      <g fill="none" stroke="#d62a41" strokeOpacity="0.82" strokeWidth="20" strokeLinejoin="round">
        <path d="M800 110Q765 160 773 220Q795 300 795 370L788 500L775 560L790 640L798 730L818 830V925L840 925L900 1000L960 1050L990 1090L1220 1235L1250 1180L1275 1165Q1100 1040 960 965L875 905L890 800L892 700L908 600L895 450L885 330L905 270Q905 200 832 115" />
      </g>
      <circle cx="803" cy="104" r="22" fill="#09a35b" />
      <circle cx="831" cy="117" r="24" fill="#dd0728" stroke="#fff" strokeWidth="5" />
      {[
        [788, 493],
        [819, 837],
        [873, 904],
        [1222, 1246],
      ].map(([x, y]) => (
        <circle key={y} cx={x} cy={y} r="19" fill="#fff" stroke="#cd1230" strokeWidth="7" />
      ))}
      {[
        { x: 780, y: 600, n: "1" },
        { x: 960, y: 1047, n: "2" },
        { x: 1274, y: 1166, n: "3" },
        { x: 891, y: 825, n: "4" },
        { x: 905, y: 302, n: "5" },
      ].map(({ x, y, n }) => (
        <g key={n}>
          <circle cx={x} cy={y} r="29" fill="#d9052a" stroke="#fff" strokeWidth="6" />
          <text x={x} y={y + 5} fontSize="36" fontWeight="900" textAnchor="middle" fill="#fff">
            {n}
          </text>
        </g>
      ))}
    </svg>
  );
}

type EventCardProps = {
  map: ReactNode;
  title: string;
  organiser: string;
  description: string;
  date: string;
};

function EventCard({ map, title, organiser, description, date }: EventCardProps) {
  return (
    <article className="rounded-[40px] bg-[#e5fcc2] px-10 pt-10 pb-[39px] text-[32px] leading-[38px] text-[#073a4b]">
      {map}
      <h2 className="px-4 pt-[17px] text-[40px] leading-[48px] text-[#45ada8]">
        <a href="#event">{title}</a>
      </h2>
      <p className="mt-11">Organiser: {organiser}</p>
      <p className="mt-[42px]">{description}</p>
      <hr className="mt-[37px] mb-[33px] border-t-2 border-[#cee3af]" />
      <p>{date}</p>
    </article>
  );
}

function SectionHeading({ children }: { children: ReactNode }) {
  return (
    <h1 className="px-4 font-[Inter,sans-serif] text-[80px] leading-[96px] text-[#e5fcc2]">{children}</h1>
  );
}

export default function App() {
  return (
    <div className="h-screen overflow-hidden bg-linear-to-b from-[#45ada8] to-[#073a4b] font-[Lato,sans-serif] [font-variant-ligatures:none]">
      <header className="bg-[#073a4b] px-8 pt-[33px] pb-[5px] text-right text-[32px] leading-[38px] text-[#e5fcc2]">
        <p>You are logged in as calmcadence</p>
      </header>
      <main className="px-[30px] pt-[47px]">
        <section>
          <SectionHeading>Events I'm going to:</SectionHeading>
          <div className="mt-[17px] flex flex-col gap-12">
            <EventCard
              map={<WimbledonMap />}
              title="Cardiff-half training block long run"
              organiser="calmcadence"
              description="15km or thereabouts"
              date="May 4, 2024"
            />
            <EventCard
              map={<RoathMap />}
              title="ADMIN - Couch to 5k Graduation Event"
              organiser="calmcadence"
              description="5k"
              date="July 27, 2024"
            />
          </div>
        </section>
        <section className="pt-[95px]">
          <SectionHeading>Events I've been to:</SectionHeading>
        </section>
      </main>
    </div>
  );
}
